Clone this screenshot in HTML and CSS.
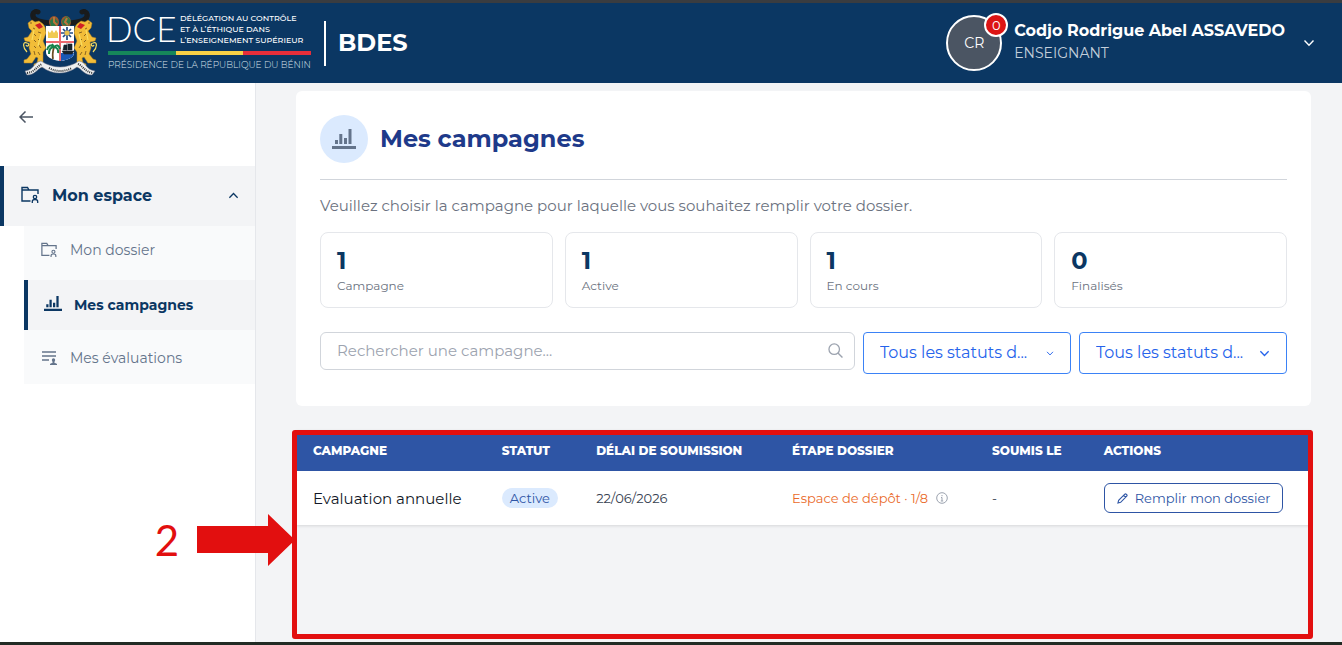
FILE: index.html
```html
<!DOCTYPE html>
<html lang="fr">
<head>
<meta charset="utf-8">
<title>BDES - Mes campagnes</title>
<link rel="stylesheet" href="styles.css">
</head>
<body>
<svg class="sprite" aria-hidden="true">
  <symbol id="chevron" viewBox="0 0 12 12"><path d="M1.5 3.5 6 8.2l4.500-4.700" fill="none" stroke="currentColor" stroke-width="1.400"/></symbol>
  <symbol id="folder" viewBox="0 0 18 18"><path d="M9.500 15H1V1.500h5.500L8 4h9v4M1 4h7" fill="none" stroke="currentColor" stroke-width="1.400"/><circle cx="14" cy="11" r="1.700" fill="none" stroke="currentColor" stroke-width="1.300"/><path d="M11.300 17v-1.500c0-1.500 1-2 2.700-2s2.700.5 2.700 2V17" fill="none" stroke="currentColor" stroke-width="1.300"/></symbol>
  <symbol id="bars" viewBox="0 0 24 20"><path d="M0 17h24v3H0zM3 11h3v4H3zM7.300 5h3v10h-3zM12 9h3v6h-3zM16.500 0h3v15h-3z" fill="currentColor"/></symbol>
</svg>
<div class="app">
  <header class="topbar">
    <a class="brand" href="#">
      <svg class="arms" viewBox="0 0 74 68" role="img" aria-label="Armoiries du Bénin">
        <g fill="none" stroke="#191b1c" stroke-linecap="round">
          <path d="M31 13C23 15 10 12 10 6c0-3 3-4 5-3" stroke-width="5"/>
          <path d="M43 13c8 2 21-1 21-7 0-3-3-4-5-3" stroke-width="5"/>
        </g>
        <path d="M14 1c-6 1-7 6-4 10M60 1c6 1 7 6 4 10" fill="none" stroke="#191b1c" stroke-width="2"/>
        <ellipse cx="31" cy="13" rx="5" ry="6" fill="#9a582d"/><ellipse cx="43" cy="13" rx="5" ry="6" fill="#9a582d"/>
        <path d="M27 12l4-4 4 5-3 5-4-1zM39 12l5-5 4 5-3 5-5-1z" fill="#2e7845"/>
        <path d="M31 8v5l3 3M44 9l-2 4 3 3" fill="none" stroke="#bd743b" stroke-width="2"/>
        <g id="cat">
          <path d="M20 15l-4-3-4 1-3-2-4 3 1 5 3 3-4 6-4 1 1 3 5 1-1 6 2 6-4 5-3 1v3h8l4-6 2 1-1 5-3 1v3h9V43l3-4-3-7 3-8-1-6z" fill="#f2bd38" stroke="#b98420" stroke-width=".5"/>
          <path d="M12 16l5-2 3 4-4 2z" fill="#cf2026"/>
          <path d="M7 14h2m1 5 2 1m-1 5 2 2m2-4 3 1m-7 7 2 2m2-3 2 2m-6 5 2 2m3-3 2 3m-7 3 1 4m3-3 2 3" stroke="#8a6420" stroke-width="1"/>
          <path d="M4 43C-1 38 0 32 4 34c4 1 0 5-1 2M11 21l-2 10M18 25l-3 12" fill="none" stroke="#f9dd60" stroke-width="1.200"/>
        </g>
        <use href="#cat" transform="translate(74 0) scale(-1 1)"/>
        <path d="M23 17h28v26q0 7-14 9-14-2-14-9z" fill="#fff"/>
        <path d="M37 34h14v10q0 6-14 8z" fill="#fff"/>
        <path d="M38 44h13q0 6-13 8z" fill="#1858b4"/>
        <path d="M36 17h2v35h-2zM23 32h28v2H23z" fill="#ed6a6f"/>
        <path d="M25 22l2 2 2-3 2 3 2-3 2 3v5H25zM25 27h10v2H25z" fill="#f0ca50"/>
        <path d="M44 18v13M38 24h12M40 20l8 8m0-8-8 8" stroke="#204c85" stroke-width="1.700"/><circle cx="44" cy="24" r="2.500" fill="#e6c04f"/>
        <path d="M31 38q-2 7-1 12" fill="none" stroke="#6b4c23" stroke-width="1.800"/>
        <path d="M31 38q-5-4-7 3m7-3q-5 0-5 7m5-7q4-4 6 2m-6-2q5 1 4 6m-4-6-2-3" fill="none" stroke="#16824a" stroke-width="2"/>
        <path d="M39 42h12l-2 3h-8zM41 36h3v5h-4zM45 35h4v6h-4zM44 34v9" fill="#17232c" stroke="#17232c" stroke-width=".6"/>
        <path d="M2 62c9-1 9-9 16-10 6 4 13 6 19 6s13-2 19-6c7 1 7 9 16 10l-3 4c-8 0-10-6-15-8-11 8-24 8-35 0-5 2-7 8-15 8z" fill="#eef0f0" stroke="#778" stroke-width=".5"/>
        <path d="M4 64c8-1 10-7 15-9M26 59q11 6 23 0M55 55c5 2 7 8 15 9" fill="none" stroke="#343638" stroke-width="2" stroke-dasharray="1 1"/>
      </svg>
      <span class="logo">
        <span class="logo-top"><span class="dce">DCE</span><span class="logo-lines">DÉLÉGATION AU CONTRÔLE<br>ET À L’ÉTHIQUE DANS<br>L’ENSEIGNEMENT SUPÉRIEUR</span></span>
        <span class="tricolor"></span>
        <span class="presidency">PRÉSIDENCE DE LA RÉPUBLIQUE DU BÉNIN</span>
      </span>
      <span class="app-name">BDES</span>
    </a>
    <button class="user" type="button">
      <span class="avatar">CR<span class="badge">0</span></span>
      <span class="user-text"><strong>Codjo Rodrigue Abel ASSAVEDO</strong><span>ENSEIGNANT</span></span>
      <svg class="chev-lg"><use href="#chevron"/></svg>
    </button>
  </header>
  <div class="body">
    <aside class="sidebar">
      <button class="back" type="button" aria-label="Retour"><svg viewBox="0 0 14 12"><path d="M14 6H1M6.500.500 1 6l5.500 5.500" fill="none" stroke="currentColor" stroke-width="1.500"/></svg></button>
      <nav>
        <button class="group" type="button"><svg class="ico"><use href="#folder"/></svg><span>Mon espace</span><svg class="chev up"><use href="#chevron"/></svg></button>
        <div class="sub">
          <a class="item" href="#"><svg class="ico-sm"><use href="#folder"/></svg>Mon dossier</a>
          <a class="item active" href="#"><svg class="ico-bars"><use href="#bars"/></svg>Mes campagnes</a>
          <a class="item" href="#"><svg class="ico-sm" viewBox="0 0 16 16"><path d="M1 2h14M1 6h14M1 10h7" fill="none" stroke="currentColor" stroke-width="1.400"/><circle cx="12.500" cy="10" r="1.700" fill="currentColor"/><path d="M9 15v-1q1-1 2.500-1v-2h2v2q1.500 0 2.500 1v1z" fill="currentColor"/></svg>Mes évaluations</a>
        </div>
      </nav>
    </aside>
    <main>
      <section class="card">
        <div class="heading"><span class="disc"><svg><use href="#bars"/></svg></span><h1>Mes campagnes</h1></div>
        <p class="intro">Veuillez choisir la campagne pour laquelle vous souhaitez remplir votre dossier.</p>
        <div class="stats">
          <div class="stat"><b>1</b><span>Campagne</span></div>
          <div class="stat"><b>1</b><span>Active</span></div>
          <div class="stat"><b>1</b><span>En cours</span></div>
          <div class="stat"><b>0</b><span>Finalisés</span></div>
        </div>
        <div class="filters">
          <div class="search"><input type="text" placeholder="Rechercher une campagne..." aria-label="Rechercher une campagne"><svg viewBox="0 0 14 14"><circle cx="5.800" cy="5.800" r="4.900" fill="none" stroke="currentColor" stroke-width="1.200"/><path d="m9.300 9.300 4.200 4.200" stroke="currentColor" stroke-width="1.300"/></svg></div>
          <div class="select"><select aria-label="Statut de la campagne"><option>Tous les statuts d...</option></select><svg class="small"><use href="#chevron"/></svg></div>
          <div class="select"><select aria-label="Statut du dossier"><option>Tous les statuts d...</option></select><svg><use href="#chevron"/></svg></div>
        </div>
      </section>
      <section class="results">
        <table>
          <colgroup><col class="c1"><col class="c2"><col class="c3"><col class="c4"><col class="c5"><col class="c6"></colgroup>
          <thead><tr><th>CAMPAGNE</th><th>STATUT</th><th>DÉLAI DE SOUMISSION</th><th>ÉTAPE DOSSIER</th><th>SOUMIS LE</th><th>ACTIONS</th></tr></thead>
          <tbody><tr>
            <td class="name">Evaluation annuelle</td>
            <td><span class="tag">Active</span></td>
            <td>22/06/2026</td>
            <td><span class="step">Espace de dépôt · 1/8<svg viewBox="0 0 12 12"><circle cx="6" cy="6" r="5.300" fill="none" stroke="currentColor"/><path d="M6 3v1.200M5 5.500h1V9M4.800 9h2.400" fill="none" stroke="currentColor"/></svg></span></td>
            <td>-</td>
            <td><button class="fill" type="button"><svg viewBox="0 0 12 12"><path d="m1 11 .800-3L8.500 1.300q.8-.6 1.600.1l.5.5q.8.8 0 1.600L4 10.200zM7.300 2.500l2.200 2.200" fill="none" stroke="currentColor" stroke-width="1.200"/></svg>Remplir mon dossier</button></td>
          </tr></tbody>
        </table>
        <div class="frame"></div>
        <div class="callout"><span>2</span><svg viewBox="0 0 98 52"><path d="M0 12h71V0l27 26-27 26V39H0z" fill="#e20f0f"/></svg></div>
      </section>
    </main>
  </div>
</div>
</body>
</html>
```
FILE: styles.css
```css
* { box-sizing: border-box; }
body { margin: 0; font-family: Montserrat, Inter, "Open Sans", sans-serif; font-size: 14px; color: #111827; background: #f3f4f6; }
button, input, select { font: inherit; color: inherit; }
button { background: none; border: 0; padding: 0; cursor: pointer; }
a { color: inherit; text-decoration: none; }
svg { display: block; flex: none; }
.sprite { position: absolute; width: 0; height: 0; }
.app { min-height: 100vh; display: flex; flex-direction: column; border-top: 3px solid #3a3c40; border-bottom: 3px solid #222b24; }

.topbar { height: 80px; background: #0b3763; color: #fff; display: flex; align-items: center; justify-content: space-between; padding: 0 27px 0 23px; }
.brand { display: flex; align-items: center; }
.arms { width: 74px; height: 68px; }
.logo { display: flex; flex-direction: column; width: 203px; margin-left: 11px; }
.logo-top { display: flex; align-items: center; height: 34px; }
.dce { width: 74px; font-family: Lato, sans-serif; font-weight: 300; font-size: 35px; line-height: 30px; margin: 0 0 8px -2px; }
.logo-lines { font-size: 8px; font-weight: 500; line-height: 11px; white-space: nowrap; margin-bottom: 6px; }
.tricolor { height: 4px; margin-top: 2px; background: linear-gradient(90deg, #16875a 33.3%, #f7d046 33.3% 66.6%, #e62e3a 66.6%); }
.presidency { font-size: 9px; font-weight: 300; line-height: 12px; margin-top: 4px; color: #dbe3ea; white-space: nowrap; }
.app-name { border-left: 2px solid #fff; margin-left: 13px; padding: 0 0 2px 12px; font-size: 24px; font-weight: 700; line-height: 43px; }
.user { display: flex; align-items: center; text-align: left; }
.avatar { position: relative; width: 56px; height: 56px; border: 2px solid #fff; border-radius: 50%; background: #4b5563; display: flex; align-items: center; justify-content: center; font-size: 14px; }
.badge { position: absolute; top: -4px; right: -8px; width: 24px; height: 24px; border: 2px solid #fff; border-radius: 50%; background: #dc1414; font-size: 13px; line-height: 20px; text-align: center; }
.user-text { display: flex; flex-direction: column; margin: 0 18px 4px 12px; }
.user-text strong { font-size: 16px; line-height: 24px; font-weight: 700; }
.user-text span { font-size: 14px; line-height: 20px; color: #c3cfdb; }
.chev-lg { width: 12px; height: 12px; }

.body { flex: 1; display: flex; }
.sidebar { width: 256px; flex: none; background: #fff; border-right: 1px solid #e5e7eb; }
.back { display: block; padding: 28px 19px 43px; color: #4b5563; }
.back svg { width: 14px; height: 12px; }
.group { display: flex; align-items: center; width: 100%; height: 60px; padding: 0 16px 2px 17px; border-left: 4px solid #0b3763; background: #f3f4f6; color: #0b3763; font-size: 16px; font-weight: 700; text-align: left; }
.group span { flex: 1; margin-left: 13px; }
.ico { width: 18px; height: 18px; }
.chev { width: 11px; height: 11px; }
.up { transform: rotate(180deg); }
.sub { display: flex; flex-direction: column; gap: 4px; margin-left: 24px; background: #f9fafb; }
.item { display: flex; align-items: center; gap: 13px; height: 50px; padding: 0 0 2px 17px; color: #64748b; font-size: 14px; }
.item.active { padding: 0 0 0 16px; gap: 12px; border-left: 4px solid #0b3763; background: #f3f4f6; color: #0b3763; font-weight: 700; }
.ico-sm { width: 16px; height: 16px; }
.ico-bars { width: 18px; height: 15px; margin-bottom: 4px; }

main { flex: 1; min-width: 0; padding: 8px 31px 3px 40px; display: flex; flex-direction: column; gap: 24px; }
.card { background: #fff; border-radius: 6px; padding: 24px 24px 32px; }
.heading { display: flex; align-items: center; gap: 12px; padding-bottom: 16px; border-bottom: 1px solid #d1d5db; }
.disc { width: 48px; height: 48px; border-radius: 50%; background: #dbeafe; color: #64748b; display: flex; align-items: center; justify-content: center; }
.disc svg { width: 24px; height: 20px; }
h1 { margin: 0; font-size: 24px; line-height: 32px; font-weight: 700; color: #1e3a8a; }
.intro { margin: 16px 0; font-size: 15px; line-height: 20px; color: #6b7280; }
.stats { display: grid; grid-template-columns: repeat(4, 1fr); gap: 12px; }
.stat { display: flex; flex-direction: column; height: 76px; padding: 12px 16px; border: 1px solid #e5e7eb; border-radius: 8px; }
.stat b { font-size: 24px; line-height: 32px; font-weight: 700; color: #0b3763; }
.stat span { font-size: 12px; line-height: 18px; color: #6b7280; }
.filters { display: flex; align-items: flex-start; gap: 8px; margin-top: 24px; }
.search { flex: 1; position: relative; }
.search input { display: block; width: 100%; height: 38px; padding: 0 40px 2px 16px; border: 1px solid #d1d5db; border-radius: 6px; background: #fff; font-size: 15px; }
.search input::placeholder { color: #9ca3af; opacity: 1; }
.search svg { position: absolute; right: 12px; top: 11px; width: 15px; height: 15px; color: #9ca3af; }
.select { position: relative; width: 208px; color: #2563eb; }
.select select { appearance: none; display: block; width: 100%; height: 42px; padding: 0 30px 2px 16px; border: 1px solid #3b82f6; border-radius: 4px; background: #fff; font-size: 16px; }
.select svg { position: absolute; right: 17px; top: 16px; width: 11px; height: 11px; pointer-events: none; }
.select .small { width: 8px; top: 16px; }

.results { position: relative; flex: 1; }
table { width: 100%; table-layout: fixed; border-collapse: collapse; background: #fff; box-shadow: 0 1px 3px #0000001f; }
.c1 { width: 18.6%; } .c2 { width: 9.3%; } .c3 { width: 19.3%; } .c4 { width: 19.7%; } .c5 { width: 11%; } .c6 { width: 22.1%; }
th, td { padding: 0 0 0 17px; text-align: left; font-size: 13px; white-space: nowrap; }
th { height: 41px; background: #2e55a5; color: #fff; font-size: 12px; font-weight: 800; }
td { height: 54px; color: #374151; }
.name { font-size: 15px; color: #111827; }
.tag { display: inline-block; padding: 0 8px; border-radius: 10px; background: #dbeafe; color: #2e55a5; line-height: 20px; }
.step { display: flex; align-items: center; gap: 8px; color: #ea6a2a; }
.step svg { width: 12px; height: 12px; color: #9ca3af; }
.fill { display: flex; align-items: center; gap: 7px; height: 30px; padding: 0 12px; border: 1px solid #2e55a5; border-radius: 6px; color: #2e55a5; }
.fill svg { width: 11px; height: 11px; }
.frame { position: absolute; inset: 0 -2px 0 -4px; border: 5px solid #e20f0f; border-radius: 3px; pointer-events: none; }
.callout { position: absolute; right: 100%; top: 84px; display: flex; align-items: center; gap: 18px; margin-right: 1px; color: #e20f0f; font-size: 42px; line-height: 52px; font-family: Lato, sans-serif; }
.callout svg { width: 98px; height: 52px; }
```
